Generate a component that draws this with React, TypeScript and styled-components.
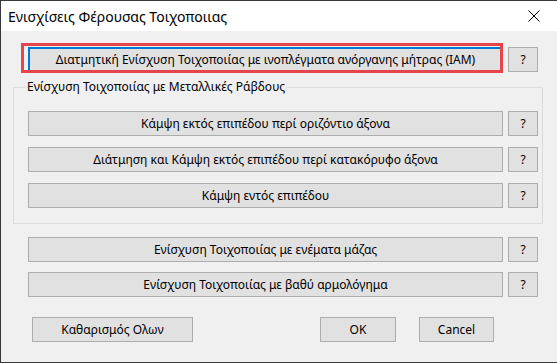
import React from "react";
import styled, { createGlobalStyle } from "styled-components";

const Global = createGlobalStyle`
  html, body { margin: 0; padding: 0; background: #f0f0f0; }
  * { box-sizing: border-box; }
`;

const FONT = `"Noto Sans", "Open Sans", sans-serif`;

const Window = styled.div`
  width: 557px;
  height: 363px;
  display: flex;
  flex-direction: column;
  background: #f0f0f0;
  border-left: 1px solid #3a3a3a;
  border-top: 1px solid #3a3a3a;
  border-bottom: 1px solid #3a3a3a;
  font-family: ${FONT};
  color: #000;
  overflow: hidden;
`;

const TitleBar = styled.div`
  height: 30px;
  flex: none;
  background: #fff;
  display: flex;
  align-items: center;
  justify-content: space-between;
  padding-left: 7px;
`;

const Title = styled.span`
  font-size: 14px;
  color: #000;
`;

const CloseBox = styled.div`
  width: 46px;
  height: 30px;
  display: flex;
  align-items: center;
  justify-content: center;
`;

const Body = styled.div`
  flex: 1;
  display: flex;
  flex-direction: column;
  padding: 16px 0 0 0;
`;

const Row = styled.div<{ $mt?: number }>`
  display: flex;
  gap: 5px;
  margin-top: ${(p) => p.$mt ?? 0}px;
  padding-left: 27px;
`;

const Btn = styled.button<{ $w: number; $focus?: boolean }>`
  width: ${(p) => p.$w}px;
  height: 25px;
  flex: none;
  margin: 0;
  padding: 0;
  background: #e1e1e1;
  border: ${(p) => (p.$focus ? "2px solid #0078d7" : "1px solid #adadad")};
  font-family: ${FONT};
  font-size: 12px;
  color: #000;
  display: flex;
  align-items: center;
  justify-content: center;
  cursor: default;
`;

const Highlight = styled.div`
  position: relative;
  display: flex;
  &::after {
    content: "";
    position: absolute;
    left: -7px;
    top: -4px;
    right: 0px;
    bottom: -1px;
    border: 3px solid #e5444b;
    pointer-events: none;
  }
`;

const Group = styled.fieldset`
  margin: 7px 0 0 12px;
  width: 530px;
  border: 1px solid #dcdcdc;
  padding: 16px 0 15px 14px;
  display: flex;
  flex-direction: column;
  gap: 11px;
`;

const Legend = styled.legend`
  font-size: 12px;
  line-height: 16px;
  padding: 0 1px;
  margin-left: -2px;
  color: #000;
`;

const GroupRow = styled.div`
  display: flex;
  gap: 5px;
`;

const Actions = styled.div`
  display: flex;
  margin-top: 20px;
  padding-left: 31px;
`;

const ActionBtn = styled(Btn)<{ $ml?: number }>`
  margin-left: ${(p) => p.$ml ?? 0}px;
`;

const CloseIcon = () => (
  <svg width="12" height="12" viewBox="0 0 12 12">
    <path d="M0.5 0.5 L11.5 11.5 M11.5 0.5 L0.5 11.5" stroke="#000" strokeWidth="1" fill="none" />
  </svg>
);

export default function App() {
  return (
    <>
      <Global />
      <Window>
        <TitleBar>
          <Title>Ενισχίσεις Φέρουσας Τοιχοποιιας</Title>
          <CloseBox>
            <CloseIcon />
          </CloseBox>
        </TitleBar>
        <Body>
          <Row>
            <Highlight>
              <Btn $w={475} $focus>
                Διατμητική Ενίσχυση Τοιχοποιίας με ινοπλέγματα ανόργανης μήτρας (IAM)
              </Btn>
            </Highlight>
            <Btn $w={30}>?</Btn>
          </Row>
          <Group>
            <Legend>Ενίσχυση Τοιχοποιίας με Μεταλλικές Ράβδους</Legend>
            <GroupRow>
              <Btn $w={475}>Κάμψη εκτός επιπέδου περί οριζόντιο άξονα</Btn>
              <Btn $w={30}>?</Btn>
            </GroupRow>
            <GroupRow>
              <Btn $w={475}>Διάτμηση και Κάμψη εκτός επιπέδου περί κατακόρυφο άξονα</Btn>
              <Btn $w={30}>?</Btn>
            </GroupRow>
            <GroupRow>
              <Btn $w={475}>Κάμψη εντός επιπέδου</Btn>
              <Btn $w={30}>?</Btn>
            </GroupRow>
          </Group>
          <Row $mt={13}>
            <Btn $w={475}>Ενίσχυση Τοιχοποιίας με ενέματα μάζας</Btn>
            <Btn $w={30}>?</Btn>
          </Row>
          <Row $mt={10}>
            <Btn $w={475}>Ενίσχυση Τοιχοποιίας με βαθύ αρμολόγημα</Btn>
            <Btn $w={30}>?</Btn>
          </Row>
          <Actions>
            <ActionBtn $w={161}>Καθαρισμός Ολων</ActionBtn>
            <ActionBtn $w={76} $ml={127}>OK</ActionBtn>
            <ActionBtn $w={75} $ml={23}>Cancel</ActionBtn>
          </Actions>
        </Body>
      </Window>
    </>
  );
}
